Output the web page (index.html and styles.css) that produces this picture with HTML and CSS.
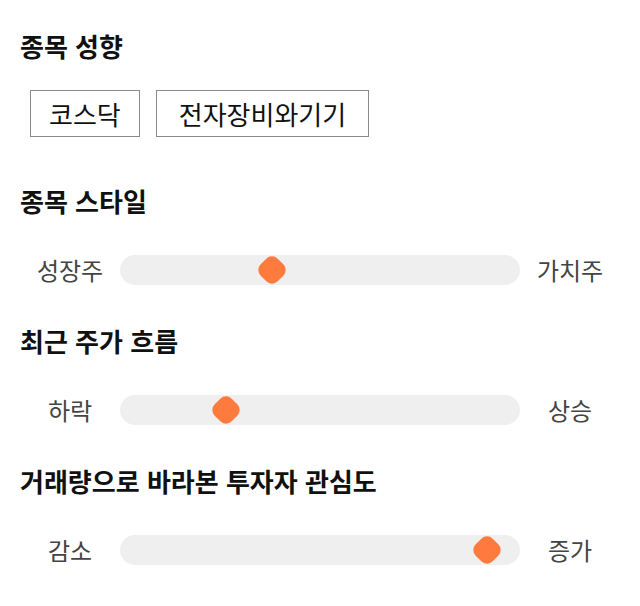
FILE: index.html
```html
<!DOCTYPE html>
<html lang="ko">
<head>
<meta charset="utf-8">
<link rel="stylesheet" href="styles.css">
</head>
<body>
<div class="page">
  <section class="sec sec-first">
    <h2 class="title">종목 성향</h2>
    <div class="tags">
      <span class="tag">코스닥</span>
      <span class="tag tag-wide">전자장비와기기</span>
    </div>
  </section>
  <section class="sec">
    <h2 class="title">종목 스타일</h2>
    <div class="slider">
      <span class="label">성장주</span>
      <div class="track"><span class="thumb" style="left:38%"></span></div>
      <span class="label">가치주</span>
    </div>
  </section>
  <section class="sec">
    <h2 class="title">최근 주가 흐름</h2>
    <div class="slider">
      <span class="label">하락</span>
      <div class="track"><span class="thumb" style="left:26.5%"></span></div>
      <span class="label">상승</span>
    </div>
  </section>
  <section class="sec">
    <h2 class="title">거래량으로 바라본 투자자 관심도</h2>
    <div class="slider">
      <span class="label">감소</span>
      <div class="track"><span class="thumb" style="left:91.75%"></span></div>
      <span class="label">증가</span>
    </div>
  </section>
</div>
</body>
</html>
```

FILE: styles.css
```css
html, body {
  margin: 0;
  padding: 0;
  background: #ffffff;
}
body {
  font-family: "Noto Sans CJK KR", "Noto Sans", sans-serif;
  color: #111;
}
.page {
  padding: 30px 20px 0 20px;
  display: flex;
  flex-direction: column;
}
.sec {
  display: flex;
  flex-direction: column;
}
.title {
  margin: 0;
  font-size: 26px;
  font-weight: 700;
  line-height: 32px;
  height: 32px;
  color: #111;
  white-space: nowrap;
}
.tags {
  display: flex;
  gap: 16px;
  margin-top: 28px;
  margin-left: 10px;
  margin-bottom: 48px;
}
.tag {
  display: flex;
  align-items: center;
  justify-content: center;
  height: 45px;
  padding: 0 18px;
  border: 1px solid #8a8a8a;
  font-size: 26px;
  line-height: 45px;
  color: #111;
}
.tag-wide {
  padding: 0 22px;
}
.slider {
  display: grid;
  grid-template-columns: 100px 1fr 100px;
  align-items: center;
  height: 30px;
  margin-top: 38px;
  margin-bottom: 40px;
}
.label {
  text-align: center;
  font-size: 24px;
  color: #444;
  line-height: 30px;
  white-space: nowrap;
}
.track {
  position: relative;
  height: 30px;
  background: #efefef;
  border-radius: 15px;
}
.thumb {
  position: absolute;
  top: 50%;
  width: 24px;
  height: 24px;
  margin-left: -12px;
  margin-top: -12px;
  background: #ff7a3d;
  border-radius: 8px;
  transform: rotate(45deg);
}
```
